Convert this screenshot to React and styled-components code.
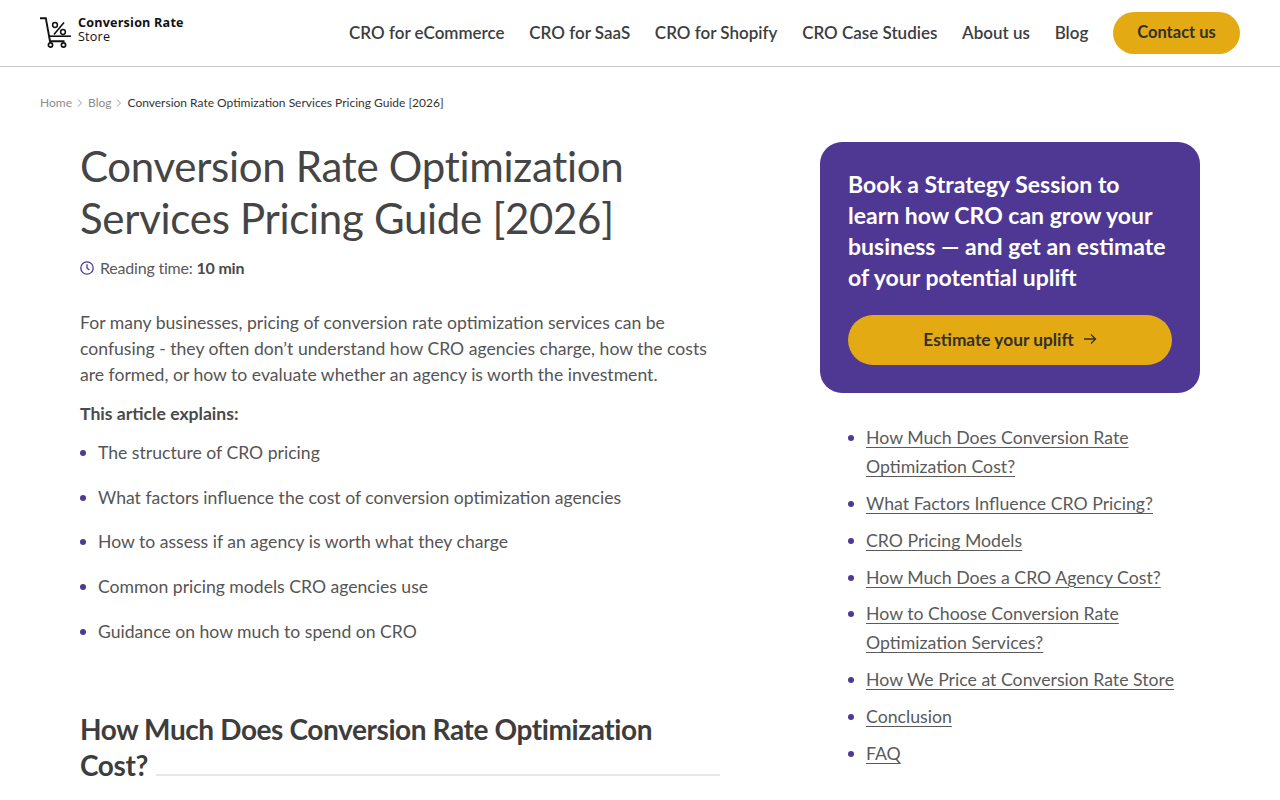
import React from 'react';
import styled, { createGlobalStyle } from 'styled-components';

const GlobalStyle = createGlobalStyle`
   html, body {
      margin: 0;
      padding: 0;
      background: #fff;
      overflow: hidden;
   }

   body {
      font-family: Lato, 'Noto Sans', sans-serif;
      color: #4a4a4a;
   }
`;

const Header = styled.header`
   height: 66px;
   border-bottom: 1px solid #c9c8d6;
   padding: 0 40px;
   display: flex;
   align-items: center;
   justify-content: space-between;
`;

const Logo = styled.a`
   display: flex;
   align-items: flex-start;
   gap: 6px;
   color: #111;
   margin-top: -1px;
`;

const LogoText = styled.div`
   font-family: 'Open Sans', sans-serif;
   font-size: 12.6px;
   line-height: 14px;
   font-weight: 700;
   letter-spacing: 0.2px;
   margin-top: -1px;

   span {
      display: block;
      font-weight: 400;
   }
`;

const Nav = styled.nav`
   display: flex;
   align-items: center;
`;

const NavLink = styled.a`
   font-size: 17px;
   line-height: 20px;
   font-weight: 600;
   color: #3d3d3d;
   margin-right: 24.7px;
   white-space: nowrap;
`;

const ContactButton = styled.a`
   width: 127px;
   height: 42px;
   border-radius: 21px;
   background: #e4aa14;
   color: #33302a;
   font-size: 16.5px;
   font-weight: 700;
   display: flex;
   align-items: center;
   justify-content: center;
   padding-bottom: 2px;
   box-sizing: border-box;
`;

const Breadcrumbs = styled.div`
   padding: 27px 40px 0;
   display: flex;
   align-items: center;
   font-size: 12px;
   line-height: 18px;
   color: #8b8b8b;
`;

const Crumb = styled.span`
   color: ${(p) => (p.$current ? '#333' : '#8b8b8b')};
`;

const CrumbSep = styled.span`
   display: flex;
   margin: 0 5px;
`;

const Layout = styled.div`
   padding: 30px 80px 0;
   display: grid;
   grid-template-columns: 640px 380px;
   justify-content: space-between;
   align-items: start;
`;

const Title = styled.h1`
   margin: -2px 0 0;
   font-size: 42px;
   line-height: 52px;
   font-weight: 400;
   letter-spacing: -0.3px;
   color: #454545;
`;

const ReadingTime = styled.div`
   margin-top: 12px;
   display: flex;
   align-items: center;
   gap: 6px;
   font-size: 16px;
   line-height: 24px;
   letter-spacing: -0.2px;
   color: #5a5a5a;

   b {
      font-weight: 700;
      color: #4a4a4a;
   }
`;

const Paragraph = styled.p`
   margin: 30px 0 0;
   font-size: 17.6px;
   line-height: 26px;
   color: #555;
`;

const Strong = styled.p`
   margin: 13px 0 0;
   font-size: 17.6px;
   line-height: 26px;
   font-weight: 700;
   color: #4a4a4a;
`;

const BulletList = styled.ul`
   margin: 13px 0 0;
   padding: 0;
   list-style: none;
`;

const Bullet = styled.li`
   position: relative;
   padding-left: 18px;
   margin-bottom: 18.7px;
   font-size: 17.6px;
   line-height: 26px;
   color: #555;

   &::before {
      content: '';
      position: absolute;
      left: 0;
      top: 10px;
      width: 6px;
      height: 6px;
      border-radius: 50%;
      background: #4f3a93;
   }
`;

const SectionTitle = styled.h2`
   position: relative;
   overflow: hidden;
   margin: 66px 0 0;
   font-size: 28px;
   line-height: 36px;
   font-weight: 700;
   letter-spacing: -0.4px;
   color: #3d3d3d;

   &::after {
      content: '';
      position: absolute;
      width: 640px;
      height: 2px;
      margin: 27px 0 0 8px;
      background: #e6e6f4;
   }
`;

const Promo = styled.div`
   background: #4e3893;
   border-radius: 22px;
   padding: 26.5px 28px 28px;
`;

const PromoText = styled.div`
   font-size: 23px;
   line-height: 31.3px;
   font-weight: 700;
   color: #fff;
`;

const PromoButton = styled.a`
   margin-top: 21.5px;
   height: 50px;
   border-radius: 25px;
   background: #e4aa14;
   color: #33302a;
   font-size: 17.3px;
   font-weight: 700;
   display: flex;
   align-items: center;
   justify-content: center;
   gap: 9px;
   padding-bottom: 2px;
   box-sizing: border-box;
`;

const Toc = styled.ul`
   margin: 30px 0 0;
   padding: 0 0 0 46px;
   list-style: none;
`;

const TocItem = styled.li`
   position: relative;
   margin-bottom: 7.8px;
   font-size: 17.7px;
   line-height: 29px;

   &::before {
      content: '';
      position: absolute;
      left: -18px;
      top: 12px;
      width: 6px;
      height: 6px;
      border-radius: 50%;
      background: #4f3a93;
   }
`;

const TocLink = styled.a`
   color: #5a5a5a;
   text-decoration: underline;
   text-decoration-thickness: 1px;
   text-underline-offset: 3px;
`;

const CartLogo = () => (
   <svg width="32" height="31" viewBox="0 0 32 31" fill="none" stroke="#111">
      <path d="M0 1.2h5.8L10 24.2h14.5" strokeWidth="1.9" />
      <path d="M9 19.2h22" strokeWidth="1.6" />
      <circle cx="10.5" cy="28" r="2.1" strokeWidth="1.7" />
      <circle cx="23.5" cy="28" r="2.1" strokeWidth="1.7" />
      <path d="M14 17.5 24 5.5" strokeWidth="1.6" />
      <circle cx="15" cy="8" r="2.4" strokeWidth="1.5" />
      <circle cx="23" cy="15" r="2.4" strokeWidth="1.5" />
   </svg>
);

const Chevron = () => (
   <svg width="6" height="8" viewBox="0 0 6 8" fill="none" stroke="#999" strokeWidth="1">
      <path d="M1 .5 4.5 4 1 7.5" />
   </svg>
);

const ClockIcon = () => (
   <svg width="14" height="14" viewBox="0 0 14 14" fill="none" stroke="#4e3893" strokeWidth="1.3">
      <circle cx="7" cy="7" r="6.2" />
      <path d="M7 3.2V7l2.4 2" />
   </svg>
);

const ArrowIcon = () => (
   <svg width="14" height="12" viewBox="0 0 14 12" fill="none" stroke="#33302a" strokeWidth="1.3">
      <path d="M1 6h11.5M8 1.5 12.5 6 8 10.5" />
   </svg>
);

const navItems = [
   'CRO for eCommerce',
   'CRO for SaaS',
   'CRO for Shopify',
   'CRO Case Studies',
   'About us',
   'Blog',
];

const bullets = [
   'The structure of CRO pricing',
   'What factors influence the cost of conversion optimization agencies',
   'How to assess if an agency is worth what they charge',
   'Common pricing models CRO agencies use',
   'Guidance on how much to spend on CRO',
];

const tocItems = [
   'How Much Does Conversion Rate Optimization Cost?',
   'What Factors Influence CRO Pricing?',
   'CRO Pricing Models',
   'How Much Does a CRO Agency Cost?',
   'How to Choose Conversion Rate Optimization Services?',
   'How We Price at Conversion Rate Store',
   'Conclusion',
   'FAQ',
];

const App = () => {
   return (
      <>
         <GlobalStyle />
         <Header>
            <Logo>
               <CartLogo />
               <LogoText>
                  Conversion Rate
                  <span>Store</span>
               </LogoText>
            </Logo>
            <Nav>
               {navItems.map((item) => (
                  <NavLink key={item}>{item}</NavLink>
               ))}
               <ContactButton>Contact us</ContactButton>
            </Nav>
         </Header>

         <Breadcrumbs>
            <Crumb>Home</Crumb>
            <CrumbSep>
               <Chevron />
            </CrumbSep>
            <Crumb>Blog</Crumb>
            <CrumbSep>
               <Chevron />
            </CrumbSep>
            <Crumb $current>Conversion Rate Optimization Services Pricing Guide [2026]</Crumb>
         </Breadcrumbs>

         <Layout>
            <main>
               <Title>Conversion Rate Optimization Services Pricing Guide [2026]</Title>
               <ReadingTime>
                  <ClockIcon />
                  <span>
                     Reading time: <b>10 min</b>
                  </span>
               </ReadingTime>
               <Paragraph>
                  For many businesses, pricing of conversion rate optimization services can be
                  confusing - they often don’t understand how CRO agencies charge, how the costs
                  are formed, or how to evaluate whether an agency is worth the investment.
               </Paragraph>
               <Strong>This article explains:</Strong>
               <BulletList>
                  {bullets.map((item) => (
                     <Bullet key={item}>{item}</Bullet>
                  ))}
               </BulletList>
               <SectionTitle>How Much Does Conversion Rate Optimization Cost?</SectionTitle>
            </main>

            <aside>
               <Promo>
                  <PromoText>
                     Book a Strategy Session to learn how CRO can grow your business — and get an
                     estimate of your potential uplift
                  </PromoText>
                  <PromoButton>
                     Estimate your uplift
                     <ArrowIcon />
                  </PromoButton>
               </Promo>
               <Toc>
                  {tocItems.map((item) => (
                     <TocItem key={item}>
                        <TocLink>{item}</TocLink>
                     </TocItem>
                  ))}
               </Toc>
            </aside>
         </Layout>
      </>
   );
};

export default App;
